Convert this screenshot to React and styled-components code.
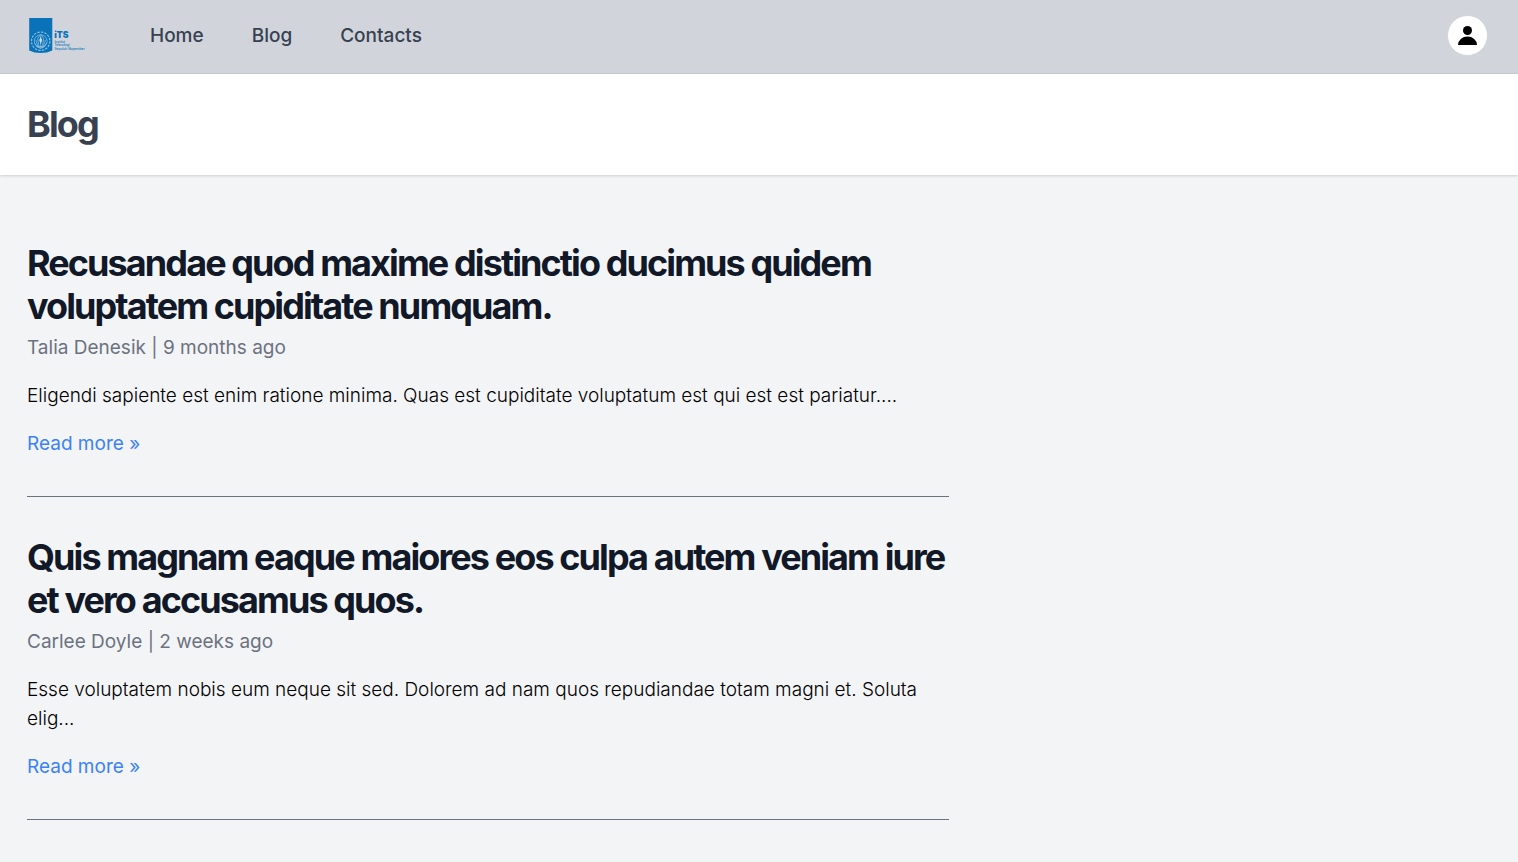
import React from "react";
import styled, { createGlobalStyle } from "styled-components";

const GlobalStyle = createGlobalStyle`
  *, *::before, *::after { box-sizing: border-box; }
  body {
    margin: 0;
    min-height: 100vh;
    background: #f3f4f6;
    color: #000;
    font-family: Inter, "Liberation Sans", sans-serif;
    font-size: 19px;
    line-height: 29px;
  }
  h1, h2, p { margin: 0; }
  a { color: inherit; text-decoration: none; }
`;

const NavBar = styled.nav`
  display: flex;
  align-items: center;
  min-height: 74px;
  padding: 0 30px 2px 28px;
  background: #d1d5db;
  border-bottom: 1px solid #c9cdd4;
`;

const LogoLink = styled.a`
  display: flex;
  margin-right: 64px;
`;

const NavLinks = styled.div`
  display: flex;
  flex: 1;
  gap: 48px;
`;

const NavLink = styled.a`
  color: #374151;
  font-weight: 500;
`;

const AvatarButton = styled.button`
  display: flex;
  align-items: center;
  justify-content: center;
  width: 41px;
  height: 41px;
  padding: 0;
  border: 1px solid #d1d5db;
  border-radius: 50%;
  background: #fff;
  cursor: pointer;
`;

const PageHeader = styled.header`
  padding: 29px 27px;
  background: #fff;
  box-shadow: 0 1px 3px rgba(0, 0, 0, 0.1), 0 1px 2px rgba(0, 0, 0, 0.06);
`;

const Title = styled.h1`
  color: ${({ $color }) => $color};
  font-size: 36px;
  font-weight: 700;
  line-height: 43px;
  letter-spacing: -0.053em;
`;

const Main = styled.main`
  padding: 67px 27px 0;
`;

const Post = styled.article`
  max-width: 922px;
  margin-bottom: 39px;
  padding-bottom: 38px;
  border-bottom: 1px solid #6b7280;
`;

const Meta = styled.div`
  margin-top: 5px;
  color: #6b7280;
`;

const Excerpt = styled.p`
  margin: 19px 0;
  font-weight: 300;
`;

const ReadMore = styled.a`
  display: block;
  color: #3b82f6;
`;

const LogoText = styled.text`
  fill: #0a72b9;
  font-family: Inter, sans-serif;
  font-size: ${({ $size }) => $size}px;
  font-weight: ${({ $bold }) => ($bold ? 900 : 500)};
`;

const posts = [
  {
    title: "Recusandae quod maxime distinctio ducimus quidem voluptatem cupiditate numquam.",
    author: "Talia Denesik",
    date: "9 months ago",
    excerpt:
      "Eligendi sapiente est enim ratione minima. Quas est cupiditate voluptatum est qui est est pariatur....",
  },
  {
    title: "Quis magnam eaque maiores eos culpa autem veniam iure et vero accusamus quos.",
    author: "Carlee Doyle",
    date: "2 weeks ago",
    excerpt:
      "Esse voluptatem nobis eum neque sit sed. Dolorem ad nam quos repudiandae totam magni et. Soluta elig...",
  },
];

function Logo() {
  return (
    <svg width="58" height="36" viewBox="0 0 580 360" role="img" aria-label="ITS">
      <path d="M12 0h231v325q-50 25-115 25T12 325z" fill="#0a72b9" />
      <g fill="none" stroke="#8fbfdf" strokeWidth="8">
        <circle cx="127" cy="232" r="92" strokeWidth="12" strokeDasharray="24 12" />
        <circle cx="127" cy="232" r="64" />
        <path d="M127 165l30 40-10 60 20 20h-80l20-20-10-60zM127 180v100M82 220q0 50 45 70q45-20 45-70M67 250q20 50 60 55q40-5 60-55" />
      </g>
      <path d="M127 190l15 30-15 40-15-40z" fill="#c9deed" />
      <LogoText x="262" y="200" $size={86} $bold>iTS</LogoText>
      <LogoText x="264" y="246" $size={33}>Institut</LogoText>
      <LogoText x="264" y="281" $size={33}>Teknologi</LogoText>
      <LogoText x="264" y="316" $size={33}>Sepuluh Nopember</LogoText>
    </svg>
  );
}

function UserIcon() {
  return (
    <svg width="19" height="19" viewBox="0 0 38 38" aria-hidden="true">
      <circle cx="19" cy="9" r="9" />
      <path d="M0 38a19 17 0 0 1 38 0z" />
    </svg>
  );
}

export default function App() {
  return (
    <>
      <GlobalStyle />
      <NavBar>
        <LogoLink href="#">
          <Logo />
        </LogoLink>
        <NavLinks>
          <NavLink href="#">Home</NavLink>
          <NavLink href="#">Blog</NavLink>
          <NavLink href="#">Contacts</NavLink>
        </NavLinks>
        <AvatarButton type="button" aria-label="User menu">
          <UserIcon />
        </AvatarButton>
      </NavBar>
      <PageHeader>
        <Title $color="#374151">Blog</Title>
      </PageHeader>
      <Main>
        {posts.map((post) => (
          <Post key={post.title}>
            <Title as="h2" $color="#111827">
              <a href="#">{post.title}</a>
            </Title>
            <Meta>
              {post.author} | {post.date}
            </Meta>
            <Excerpt>{post.excerpt}</Excerpt>
            <ReadMore href="#">Read more »</ReadMore>
          </Post>
        ))}
      </Main>
    </>
  );
}
